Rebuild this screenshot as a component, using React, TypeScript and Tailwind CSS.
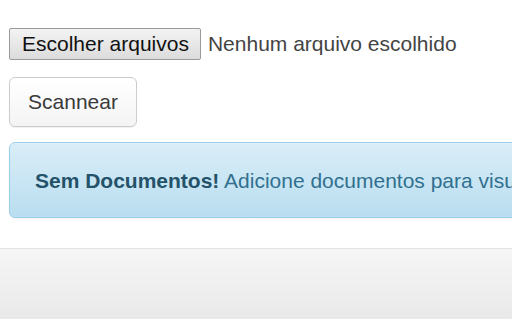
export default function App() {
  return (
    <div className="min-h-[320px] w-[512px] overflow-hidden bg-white font-['Liberation_Sans',Arial,sans-serif] text-[21px] text-[#333]">
      <div className="pl-[9px] pt-[28px]">
        {/* file input */}
        <div className="flex items-center whitespace-nowrap">
          <button className="h-[32px] rounded-[2px] border border-[#9a9a9a] bg-gradient-to-b from-[#f3f3f3] to-[#dcdcdc] pl-[12px] pr-[11px] leading-[30px] text-[21px] text-[#111]">
            Escolher arquivos
          </button>
          <span className="ml-[7px] leading-[30px] text-[#444]">Nenhum arquivo escolhido</span>
        </div>

        <button className="mt-[17px] h-[50px] w-[128px] rounded-[6px] border border-[#ccc] bg-gradient-to-b from-white to-[#f4f4f4] text-center leading-[30px] text-[#3a3a3a] shadow-[0_1px_1px_rgba(0,0,0,0.06)]">
          Scannear
        </button>

        <div className="mt-[15px] mb-[30px] w-[560px] whitespace-nowrap rounded-[6px] border border-[#9acfea] bg-gradient-to-b from-[#d9edf7] to-[#b9def0] px-[25px] pt-[23px] pb-[21px] leading-[30px] text-[#31708f] shadow-[inset_0_1px_0_rgba(255,255,255,0.25),0_1px_2px_rgba(0,0,0,0.05)]">
          <strong className="font-bold text-[#245269]">Sem Documentos!</strong> Adicione documentos para visualizar.
        </div>
      </div>

      {/* footer */}
      <footer className="h-[71px] border-t border-[#e3e3e3] bg-gradient-to-b from-[#f6f6f6] to-[#e9e9e9]" />
    </div>
  );
}
